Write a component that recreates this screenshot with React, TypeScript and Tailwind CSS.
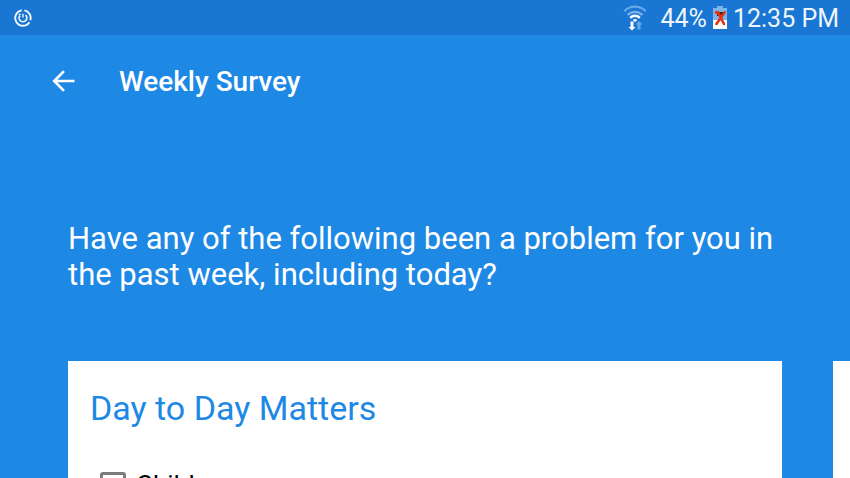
import { useState } from 'react';

function SyncIcon() {
  return (
    <svg width="18" height="18" viewBox="0 0 18 18" fill="none" stroke="#f0f6fd" aria-hidden="true">
      <path d="M10.4 1.4A7.6 7.6 0 0 1 16.3 11.2M15.4 13.2A7.7 7.7 0 1 1 7.8 1.4" strokeWidth="1.9" />
      <path d="M11.6 6.2A3.8 3.8 0 1 1 6 6.6" strokeWidth="1.7" />
      <path d="M4.6 5.4H6.8M9 4.8V8.6" strokeWidth="1.4" />
    </svg>
  );
}

function WifiIcon() {
  return (
    <svg width="24" height="26" viewBox="0 0 24 26" fill="none" aria-hidden="true">
      <path d="M1.2 6.2C7.5 .2 16.5 .2 22.8 6.2" stroke="#68a8e6" strokeWidth="2.2" />
      <path d="M4.6 10C9 5.8 15 5.8 19.4 10" stroke="#78b2ea" strokeWidth="2.2" />
      <path d="M7.2 12.8C10 10 14 10 16.8 12.8" stroke="#fff" strokeWidth="2.4" />
      <path d="M9.8 15Q12 13.2 14.2 15L12 17.2Z" fill="#fff" />
      <path d="M7.5 16.4h3V22h2L9 25.6 5.5 22h2Z" fill="#fff" />
      <path d="M14.5 24.6h3V19.6h2L16 16l-3.5 3.6h2Z" fill="#68a8e6" />
    </svg>
  );
}

function BatteryIcon() {
  return (
    <svg width="14" height="23" viewBox="0 0 14 23" aria-hidden="true">
      <path d="M4 0h6v2h4v12H0V2h4Z" fill="#7db4ea" />
      <path d="M0 14h14v9H0Z" fill="#fff" />
      <path d="M4 6h6v4H4Z" fill="#2b2b2b" />
      <path d="M3 6.4 5 6.4 11 18M11.5 6.4 3.4 18" fill="none" stroke="#e8320f" strokeWidth="2.6" strokeLinecap="round" />
    </svg>
  );
}

function StatusBar() {
  return (
    <div className="flex h-[35px] shrink-0 items-center justify-between bg-[#1976d2] pr-[11px] pl-3.5 text-[#eef5fc]">
      <SyncIcon />
      <div className="flex items-center text-[25px] leading-[35px]">
        <WifiIcon />
        <span className="mt-0.5 ml-3.5">44%</span>
        <span className="ml-1.5">
          <BatteryIcon />
        </span>
        <span className="mt-0.5 ml-1.5">12:35 PM</span>
      </div>
    </div>
  );
}

function TopBar() {
  return (
    <header className="flex h-[92px] shrink-0 items-center pl-[52px]">
      <button type="button" aria-label="Back" className="text-white">
        <svg width="23" height="22" viewBox="0 0 23 22" fill="none" stroke="currentColor" strokeWidth="2.6" aria-hidden="true">
          <path d="M12 1.2 2.2 11 12 20.8M2.2 11H22.5" />
        </svg>
      </button>
      <h1 className="mt-0.5 ml-11 text-[28px] font-medium">Weekly Survey</h1>
    </header>
  );
}

function Option({ label }: { label: string }) {
  const [checked, setChecked] = useState(false);

  return (
    <label className="flex items-center gap-2.5 text-[26px] leading-8 text-black">
      <input
        type="checkbox"
        checked={checked}
        onChange={(e) => setChecked(e.target.checked)}
        className="size-[26px] appearance-none rounded-[3px] border-3 border-[#7b7b7b] checked:bg-[#1e88e5]"
      />
      {label}
    </label>
  );
}

export default function App() {
  return (
    <div className="flex h-screen flex-col overflow-hidden bg-[#1e88e5] font-[Roboto,sans-serif] text-white">
      <StatusBar />
      <TopBar />
      <main className="flex flex-1 flex-col">
        <p className="mt-[94px] px-[68px] text-[31px] leading-9">
          Have any of the following been a problem for you in the past week, including today?
        </p>
        <div className="mt-[68px] flex flex-1 pl-[68px]">
          <section className="flex-1 bg-white px-[22px] pt-6">
            <h2 className="text-[34px] leading-[46px] text-[#1e88e5]">Day to Day Matters</h2>
            <div className="mt-[38px] pl-2.5">
              <Option label="Child care" />
            </div>
          </section>
          <section className="ml-[51px] w-[17px] bg-white" aria-label="Next category" />
        </div>
      </main>
    </div>
  );
}
